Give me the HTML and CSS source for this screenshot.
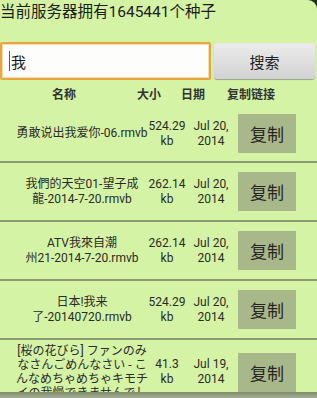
FILE: index.html
```html
<!DOCTYPE html>
<html lang="zh">
<head>
    <meta charset="UTF-8">
    <meta name="viewport" content="width=device-width, initial-scale=1.0">
    <title>种子搜索</title>
    <link rel="stylesheet" href="styles.css">
</head>
<body>
    <div class="title">当前服务器拥有1645441个种子</div>

    <div class="search">
        <div class="input"><span class="caret"></span>我</div>
        <button class="btn">搜索</button>
    </div>

    <div class="head">
        <span class="h-name">名称</span>
        <span class="h-size">大小</span>
        <span class="h-date">日期</span>
        <span class="h-link">复制链接</span>
    </div>

    <div class="list">
        <div class="row">
            <div class="name">勇敢说出我爱你-06.rmvb</div>
            <div class="size">524.29<br>kb</div>
            <div class="date">Jul 20,<br>2014</div>
            <button class="copy">复制</button>
        </div>
        <div class="row">
            <div class="name">我們的天空01-望子成<br>龍-2014-7-20.rmvb</div>
            <div class="size">262.14<br>kb</div>
            <div class="date">Jul 20,<br>2014</div>
            <button class="copy">复制</button>
        </div>
        <div class="row">
            <div class="name">ATV我來自潮<br>州21-2014-7-20.rmvb</div>
            <div class="size">262.14<br>kb</div>
            <div class="date">Jul 20,<br>2014</div>
            <button class="copy">复制</button>
        </div>
        <div class="row">
            <div class="name">日本!我来<br>了-20140720.rmvb</div>
            <div class="size">524.29<br>kb</div>
            <div class="date">Jul 20,<br>2014</div>
            <button class="copy">复制</button>
        </div>
        <div class="row row-long">
            <div class="name">[桜の花びら] ファンのみ<br>なさんごめんなさい - こ<br>んなめちゃめちゃキモチ<br>イの我慢できませんでし</div>
            <div class="size">41.3<br>kb</div>
            <div class="date">Jul 19,<br>2014</div>
            <button class="copy">复制</button>
        </div>
    </div>

    <div class="bottombar"></div>
</body>
</html>
```

FILE: styles.css
```css
html {
    background-color: #2b2b2b;
    height: 100%;
    overflow: hidden;
}

body {
    margin: 0;
    height: 100%;
    overflow: hidden;
    background-color: #d5f3a5;
    border-top-right-radius: 9px;
    font-family: Roboto, "Noto Sans CJK SC", sans-serif;
    color: #222;
}

.title {
    height: 24px;
    line-height: 24px;
    font-size: 15.5px;
    color: #1c1c1c;
    white-space: nowrap;
}

.search {
    display: flex;
    gap: 3px;
    margin-top: 18px;
    height: 38px;
}

.input {
    width: 211px;
    box-sizing: border-box;
    border: 2px solid #e8a43e;
    border-radius: 2px;
    background-color: #fdfdfb;
    box-shadow: inset 0 0 0 1px #f6dcae;
    display: flex;
    align-items: center;
    padding-left: 7px;
    font-size: 15px;
    color: #1a1a1a;
}

.caret {
    width: 1px;
    height: 20px;
    background-color: #4a5870;
    margin-right: 1px;
}

.btn {
    width: 101px;
    height: 36px;
    margin-top: 1px;
    border: none;
    border-radius: 3px;
    background: linear-gradient(#ececec, #d2d2d2);
    box-shadow: 0 1px 1px #9aa58a;
    font-family: Roboto, "Noto Sans CJK SC", sans-serif;
    font-size: 15px;
    color: #222;
    padding: 0;
}

.head {
    display: flex;
    height: 26px;
    align-items: center;
    font-size: 12px;
    font-weight: bold;
    color: #333;
}

.head span {
    text-align: center;
}

.h-name { width: 128px; }
.h-size { width: 42px; }
.h-date { width: 46px; }
.h-link { width: 70px; }

.row {
    display: flex;
    align-items: center;
    box-sizing: border-box;
    min-height: 59px;
    padding: 4px 0;
    border-bottom: 2px solid #8b9a72;
    font-size: 12px;
    line-height: 15px;
    color: #2a2a2a;
}

.row:first-child {
    min-height: 57px;
}

.row-long .name {
    line-height: 14px;
}

.name {
    width: 132px;
    margin-left: 16px;
    text-align: center;
    white-space: nowrap;
}

.size {
    width: 38px;
    text-align: center;
}

.date {
    width: 44px;
    margin-left: 3px;
    text-align: center;
}

.copy {
    width: 58px;
    height: 39px;
    margin-left: 5px;
    border: none;
    padding: 0;
    background-color: #a9b88a;
    font-family: Roboto, "Noto Sans CJK SC", sans-serif;
    font-size: 17px;
    color: #262626;
}

.bottombar {
    position: fixed;
    left: 0;
    right: 0;
    bottom: 0;
    height: 6px;
    background: linear-gradient(#7f8c6c, #a4ae94);
}
```
